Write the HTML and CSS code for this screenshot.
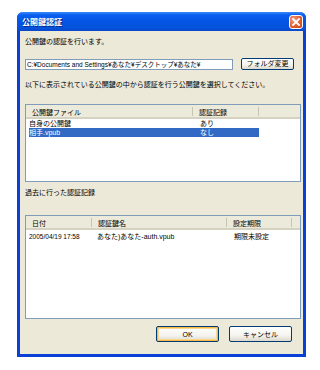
FILE: index.html
```html
<!DOCTYPE html>
<html lang="ja">

<head>
    <meta charset="UTF-8">
    <meta name="viewport" content="width=device-width, initial-scale=1.0">
    <title>公開鍵認証</title>
    <link rel="stylesheet" href="styles.css">
</head>

<body>
    <div class="dialog">
        <!-- タイトルバー -->
        <div class="titlebar">
            <span class="title">公開鍵認証</span>
            <span class="close">
                <svg width="12" height="12" viewBox="0 0 12 12">
                    <path d="M3 3 L9 9 M9 3 L3 9" stroke="#fff" stroke-width="1.8" stroke-linecap="square" />
                </svg>
            </span>
        </div>

        <div class="content">
            <p class="msg first">公開鍵の認証を行います。</p>

            <div class="pathrow">
                <div class="path">C:¥Documents and Settings¥あなた¥デスクトップ¥あなた¥</div>
                <button class="btn small">フォルダ変更</button>
            </div>

            <p class="msg second">以下に表示されている公開鍵の中から認証を行う公開鍵を選択してください。</p>

            <!-- 公開鍵一覧 -->
            <div class="list keys">
                <div class="head">
                    <div class="hcell">公開鍵ファイル</div>
                    <div class="hcell">認証記録</div>
                    <div class="hcell"></div>
                </div>
                <div class="row">
                    <div class="cell">自身の公開鍵</div>
                    <div class="cell c2">あり</div>
                </div>
                <div class="row selected">
                    <div class="cell">相手.vpub</div>
                    <div class="cell c2">なし</div>
                </div>
            </div>

            <p class="msg third">過去に行った認証記録</p>

            <!-- 認証記録 -->
            <div class="list history">
                <div class="head">
                    <div class="hcell">日付</div>
                    <div class="hcell">認証鍵名</div>
                    <div class="hcell">設定期限</div>
                    <div class="hcell"></div>
                </div>
                <div class="row">
                    <div class="cell">2005/04/19 17:58</div>
                    <div class="cell">あなた)あなた-auth.vpub</div>
                    <div class="cell c3">期限未設定</div>
                </div>
            </div>

            <div class="buttons">
                <button class="btn default">OK</button>
                <button class="btn">キャンセル</button>
            </div>
        </div>
    </div>
</body>

</html>
```

FILE: styles.css
```css
body {
    margin: 0;
    background-color: #ffffff;
    font-family: "Liberation Sans", "Noto Sans CJK JP", sans-serif;
    font-size: 7px;
    color: #000000;
}

.dialog {
    margin: 12px 0 0 17px;
    width: 289px;
    height: 345px;
    display: flex;
    flex-direction: column;
    background-color: #0a3fd8;
    border-radius: 6px 6px 0 0;
    box-sizing: border-box;
    padding: 0 3px 3px 3px;
}

.titlebar {
    height: 19px;
    flex: none;
    display: flex;
    align-items: center;
    justify-content: space-between;
    margin: 0 -3px;
    padding: 0 3px 0 5px;
    border-radius: 6px 6px 0 0;
    background: linear-gradient(#3c8cf8 0%, #0a5fee 15%, #0554e3 50%, #0552dc 85%, #0a46c6 100%);
}

.title {
    color: #ffffff;
    font-size: 8px;
    font-weight: bold;
    text-shadow: 1px 1px 0 #0a2a8a;
}

.close {
    width: 14px;
    height: 14px;
    display: flex;
    align-items: center;
    justify-content: center;
    border: 1px solid #ffffff;
    border-radius: 3px;
    box-sizing: border-box;
    background: radial-gradient(circle at 30% 30%, #f09a80, #e05a2a 60%, #c8401c);
}

.content {
    flex: 1;
    background-color: #ece9d8;
    padding: 0 2px 0 5px;
    display: flex;
    flex-direction: column;
}

.msg {
    margin: 0;
    height: 10px;
    line-height: 10px;
    white-space: nowrap;
}

.first {
    margin-top: 6px;
}

.pathrow {
    margin-top: 11px;
    display: flex;
    align-items: center;
    gap: 8px;
}

.path {
    width: 208px;
    height: 11px;
    line-height: 10px;
    box-sizing: border-box;
    border: 1px solid #7f9db9;
    background-color: #ffffff;
    padding-left: 1px;
    white-space: nowrap;
    overflow: hidden;
    font-size: 6.5px;
}

.btn {
    font-family: inherit;
    font-size: 7px;
    padding: 0;
    border: 1px solid #003c74;
    border-radius: 2px;
    background: linear-gradient(#ffffff, #f4f3ee 60%, #dcd8cc);
    color: #000000;
    height: 16px;
    width: 63px;
}

.btn.small {
    width: 53px;
    height: 12px;
    line-height: 10px;
}

.btn.default {
    box-shadow: inset 0 0 0 1px #f8b848, inset 0 0 0 2px #fbd890;
}

.second {
    margin-top: 10px;
}

.list {
    background-color: #ffffff;
    border: 1px solid #7f9db9;
    box-sizing: border-box;
}

.keys {
    margin-top: 14px;
    width: 276px;
    height: 78px;
}

.third {
    margin-top: 6px;
}

.history {
    margin-top: 17px;
    width: 276px;
    height: 104px;
}

.head {
    display: grid;
    background-color: #ebeadb;
    border-bottom: 2px solid #d6d2c2;
    height: 14px;
    box-sizing: border-box;
}

.keys .head {
    grid-template-columns: 167px 66px 1fr;
}

.history .head {
    grid-template-columns: 66px 135px 65px 1fr;
}

.hcell {
    line-height: 12px;
    padding-left: 6px;
    border-right: 1px solid #c7c5b2;
    margin: 2px 0 0;
    height: 9px;
}

.hcell:last-child {
    border-right: none;
}

.row {
    display: grid;
    height: 9px;
    line-height: 9px;
    margin-left: 3px;
    white-space: nowrap;
}

.keys .row {
    grid-template-columns: 164px 66px;
    width: 230px;
}

.history .row {
    grid-template-columns: 63px 136px 65px;
    margin-top: 2px;
}

.keys .c2 {
    padding-left: 7px;
}

.history .cell {
    padding-left: 5px;
}

.history .cell:first-child {
    padding-left: 0;
    font-size: 6.5px;
}

.history .c3 {
    padding-left: 6px;
}

.selected {
    background-color: #316ac5;
    color: #ffffff;
}

.buttons {
    margin-top: 7px;
    display: flex;
    justify-content: flex-end;
    gap: 10px;
    padding-right: 9px;
}
```
